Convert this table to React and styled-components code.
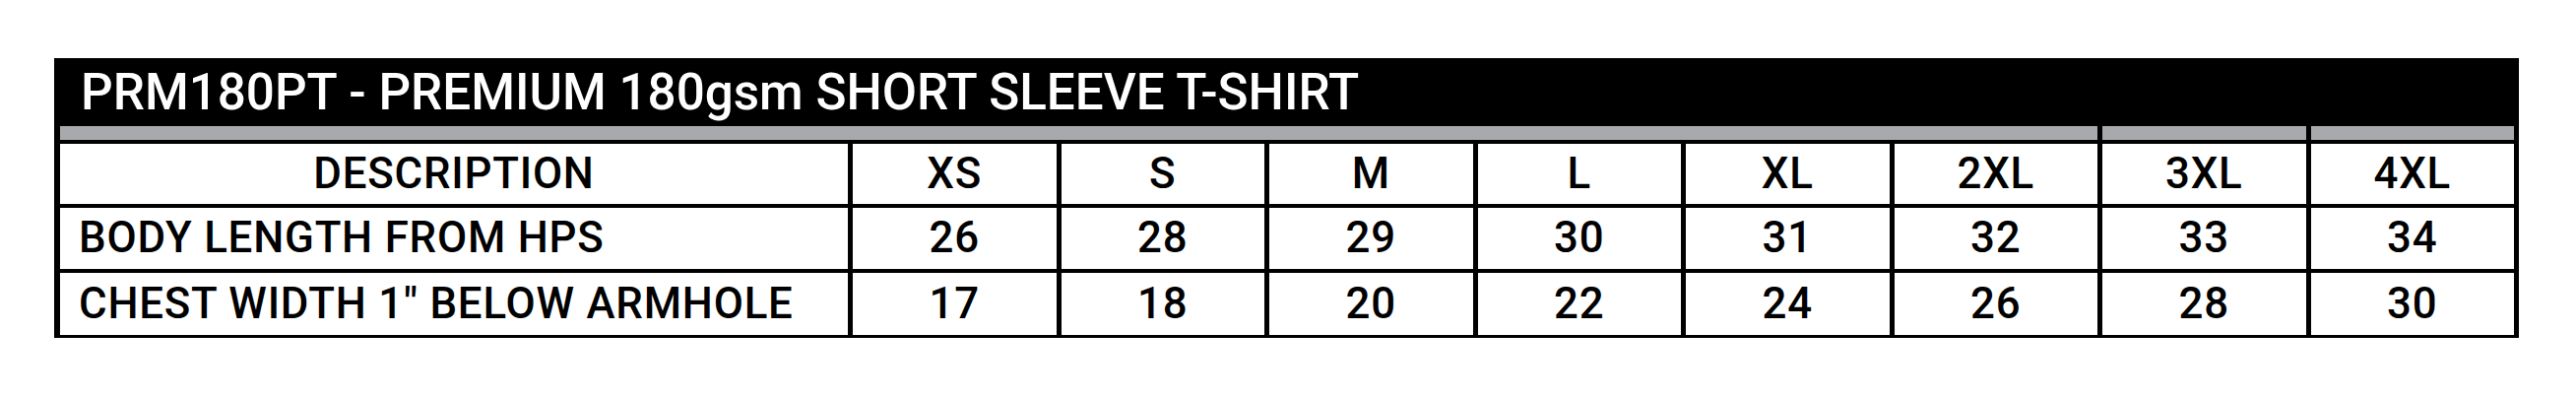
import React from "react";
import styled, { createGlobalStyle } from "styled-components";

const GlobalStyle = createGlobalStyle`
  html, body {
    margin: 0;
    padding: 0;
    background: #ffffff;
  }
  body {
    font-family: Roboto, "Liberation Sans", Arial, sans-serif;
    color: #000;
  }
`;

const Page = styled.div`
  padding: 59px 0 0 55px;
`;

const Chart = styled.section`
  width: 2503px;
`;

const TitleBar = styled.h1`
  margin: 0;
  height: 69px;
  background: #000;
  color: #fff;
  display: flex;
  align-items: center;
  padding-left: 27px;
  padding-top: 1px;
  box-sizing: border-box;
  font-size: 51.2px;
  font-weight: 500;
  line-height: 1;
  letter-spacing: 0;
`;

const Grid = styled.div`
  display: grid;
  grid-template-columns: 800px repeat(8, 1fr);
  grid-template-rows: 14px 61px 62px 63px;
  column-gap: 5px;
  row-gap: 4px;
  background: #000;
  padding: 0 5px 3px 6px;
`;

const Strip = styled.div`
  background: #a7a9ac;
  grid-column: span ${(p) => p.$span || 1};
`;

const Cell = styled.div`
  background: #fff;
  display: flex;
  align-items: center;
  justify-content: ${(p) => (p.$left ? "flex-start" : "center")};
  padding-left: ${(p) => (p.$left ? "19px" : "0")};
  font-size: 43.8px;
  font-weight: 500;
  line-height: 1;
  letter-spacing: 0.8px;
  white-space: nowrap;
`;

const sizes = ["XS", "S", "M", "L", "XL", "2XL", "3XL", "4XL"];
const rows = [
  { label: "BODY LENGTH FROM HPS", values: [26, 28, 29, 30, 31, 32, 33, 34] },
  { label: "CHEST WIDTH 1\u2033 BELOW ARMHOLE", values: [17, 18, 20, 22, 24, 26, 28, 30] },
];

export default function App() {
  return (
    <>
      <GlobalStyle />
      <Page>
        <Chart>
          <TitleBar>PRM180PT - PREMIUM 180gsm SHORT SLEEVE T-SHIRT</TitleBar>
          <Grid>
            <Strip $span={7} />
            <Strip />
            <Strip />
            <Cell>DESCRIPTION</Cell>
            {sizes.map((s) => (
              <Cell key={s}>{s}</Cell>
            ))}
            {rows.map((r) => (
              <React.Fragment key={r.label}>
                <Cell $left>{r.label}</Cell>
                {r.values.map((v, i) => (
                  <Cell key={i}>{v}</Cell>
                ))}
              </React.Fragment>
            ))}
          </Grid>
        </Chart>
      </Page>
    </>
  );
}
